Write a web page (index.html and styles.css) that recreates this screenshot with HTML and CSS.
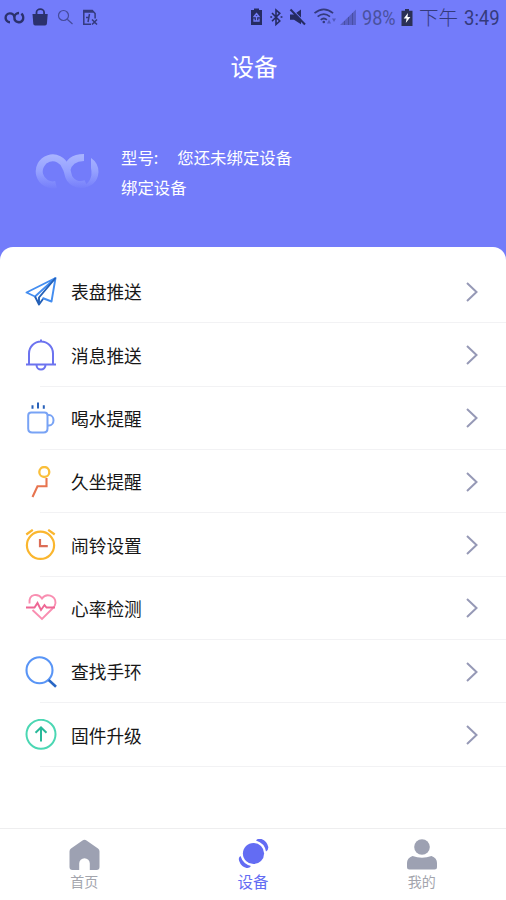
FILE: index.html
```html
<!DOCTYPE html>
<html lang="zh-CN">
<head>
    <meta charset="UTF-8">
    <meta name="viewport" content="width=device-width, initial-scale=1.0">
    <title>设备</title>
    <link rel="stylesheet" href="styles.css">
</head>
<body>
    <header class="header">
        <div class="status-bar">
            <svg class="status-left" width="100" height="34" viewBox="0 0 100 34">
                <g fill="none" stroke="#2b316d" stroke-width="2.4">
                    <path d="M10 22.2A4.4 4.4 0 1 1 14.4 17.5A4.6 4.6 0 0 1 19 13M14.4 17.5A4.5 4.5 0 0 0 23 19.5Q23.8 16 21.5 13.5"/>
                </g>
                <path fill="#2b316d" d="M32.500 14h15.200l-.8 9.800q-.2 1.700-1.800 1.700h-10q-1.600 0-1.800-1.700z"/>
                <path fill="none" stroke="#2b316d" stroke-width="1.8" d="M36.5 15v-2.500a3.8 3.300 0 0 1 7.600 0V15"/>
                <path fill="none" stroke="#454b9b" stroke-width="1.2" d="M68.5 15.5a5 5 0 1 1-10 0a5 5 0 1 1 10 0M67.5 19.5l5 4.5"/>
                <path fill="none" stroke="#343a7c" stroke-width="1.5" d="M91 24.3h-7.2V10.5h8.5l2.8 3v5M83 12h11M89.500 14l-1.500 8M86 17.5h3M92 19.5l5 5M97 19.5l-5 5"/>
            </svg>
            <svg class="status-right" width="112" height="34" viewBox="248 0 112 34">
                <path fill="#252b62" d="M251 10h3V8.500h5V10h3v15h-11z"/>
                <path fill="none" stroke="#737cfa" stroke-width="1.3" d="M256.500 13.500l2.500 3h-5zM256.500 16v5M254 18.500v2.500h5v-2.500"/>
                <path fill="none" stroke="#252b62" stroke-width="1.6" d="M272 13l7.8 8-3.8 3.5V10l3.8 3.3-7.8 8M270.3 17h1.8M280.6 17h1.8"/>
                <path fill="#252b62" d="M290 14.5h4l7-5v14.8l-7-4.5h-4z"/>
                <path fill="none" stroke="#737cfa" stroke-width="1.2" d="M292 9.5l14 14"/>
                <path fill="none" stroke="#252b62" stroke-width="2" d="M290.5 9.5l14.5 15"/>
                <g fill="none" stroke="#343a7c" stroke-width="1.7">
                    <path d="M314.5 13.2q9.3-7.5 18.6 0M317.6 16.6q6.2-5 12.4 0M320.7 19.8q3.1-2.6 6.2 0"/>
                </g>
                <circle cx="323.8" cy="22" r="1.3" fill="#343a7c"/>
                <path fill="#525abe" d="M329 19.5l2 4h-4zM334 22l-2-3.5h4z"/>
                <path fill="#5960c6" d="M340 25L356 9.5V25z"/>
                <path stroke="#484fa5" stroke-width="1" d="M344.5 21v4M348.5 17v8M352.5 13v12"/>
            </svg>
            <span class="status-text percent">98%</span>
            <svg class="battery" width="12" height="17" viewBox="0 0 12 17">
                <path fill="#2b3054" d="M.5 1.8H4V0h4v1.8h3.5V17H.5z"/>
                <path fill="#fff" d="M7 4L2.7 9.6H5.6L4.8 14 9.4 8H6.5z"/>
            </svg>
            <span class="ampm">下午</span>
            <span class="status-text time">3:49</span>
        </div>
        <h1 class="title">设备</h1>
        <div class="device">
            <svg class="device-logo" width="66" height="36" viewBox="0 0 66 36">
                <defs>
                    <linearGradient id="fade" gradientUnits="userSpaceOnUse" x1="0" y1="0" x2="0" y2="35">
                        <stop offset="0" stop-color="#aab5ff"/>
                        <stop offset=".5" stop-color="#95a1ff"/>
                        <stop offset="1" stop-color="#747dfa"/>
                    </linearGradient>
                </defs>
                <path fill="none" stroke="url(#fade)" stroke-width="7" d="M21 30.500A13.500 13.500 0 1 1 30.500 13Q32.500 17 33 20A13 12.500 0 0 0 51 29.500M31.500 17Q34 3.500 49 3.500"/>
                <path fill="url(#fade)" d="M56 4Q63.500 9 63.500 18Q62.500 33 45 34Q59 28 56 14z"/>
            </svg>
            <div class="device-info">
                <p>型号:<span class="device-name">您还未绑定设备</span></p>
                <p>绑定设备</p>
            </div>
        </div>
    </header>

    <main class="menu">
        <a class="menu-item">
            <svg class="icon" viewBox="0 0 32 32" fill="none" stroke="#438df0" stroke-width="1.9" stroke-linejoin="round">
                <path d="M30.5 2L1.5 16.5 10 20.5 30.5 2 26.5 25.5 17.5 22"/>
                <path stroke="#2460b7" d="M30.5 2L14 21.5V28.5L10 20.5M14 28.5L18 23"/>
            </svg>
            <span class="label">表盘推送</span>
            <svg class="arrow" viewBox="0 0 12 20"><path d="M1 1l9.5 9L1 19"/></svg>
        </a>
        <a class="menu-item">
            <svg class="icon" viewBox="0 0 32 32" fill="none" stroke="#6c73ef" stroke-width="2">
                <path d="M4 25V14.5a12 12 0 0 1 24 0V25M1 25.5h30M11.5 26a4.5 4.5 0 0 0 9 0M16 3V.5"/>
            </svg>
            <span class="label">消息推送</span>
            <svg class="arrow" viewBox="0 0 12 20"><path d="M1 1l9.5 9L1 19"/></svg>
        </a>
        <a class="menu-item">
            <svg class="icon" viewBox="0 0 32 32" fill="none" stroke="#78a3f5" stroke-width="2">
                <path d="M6.200 10.500h13.300q3 0 3 3v13q0 4-4 4H7.200q-4 0-4-4v-13q0-3 3-3zM22.5 13h1.5a4.3 5 0 0 1 0 10.500h-1.500"/>
                <path stroke="#2861b9" d="M7.500 3.300v3.500M13 .5v6M18.800 3.300v3.500"/>
            </svg>
            <span class="label">喝水提醒</span>
            <svg class="arrow" viewBox="0 0 12 20"><path d="M1 1l9.5 9L1 19"/></svg>
        </a>
        <a class="menu-item">
            <svg class="icon" viewBox="0 0 32 32" fill="none" stroke="#e7744f" stroke-width="2.1">
                <path d="M21.500 12v8.300H12.500L7.500 31"/>
                <circle cx="19.300" cy="6" r="5" stroke="#fabf3b" stroke-width="2.300"/>
            </svg>
            <span class="label">久坐提醒</span>
            <svg class="arrow" viewBox="0 0 12 20"><path d="M1 1l9.5 9L1 19"/></svg>
        </a>
        <a class="menu-item">
            <svg class="icon" viewBox="0 0 32 32" fill="none" stroke="#fab62e" stroke-width="2.2">
                <circle cx="15.500" cy="16.300" r="13.600"/>
                <path d="M1.300 5.500L7.800 .8M23.200 .8l6.500 4.700"/>
                <path stroke="#dc6d56" d="M15 10v7.200h7.800"/>
            </svg>
            <span class="label">闹铃设置</span>
            <svg class="arrow" viewBox="0 0 12 20"><path d="M1 1l9.5 9L1 19"/></svg>
        </a>
        <a class="menu-item">
            <svg class="icon" viewBox="0 0 32 32" fill="none" stroke="#f98eb1" stroke-width="1.9">
                <path d="M4.500 11.500C3.500 1 13.500 1.500 17 6.500C21 1 30.500 3 30.500 11Q30.300 14 27.500 16.500L17 27 7.500 18"/>
                <path stroke="#ee6694" d="M1 15.500h8.500l3-4.500 3.500 7 3.500-5 2 2.500H30"/>
            </svg>
            <span class="label">心率检测</span>
            <svg class="arrow" viewBox="0 0 12 20"><path d="M1 1l9.5 9L1 19"/></svg>
        </a>
        <a class="menu-item">
            <svg class="icon" viewBox="0 0 32 32" fill="none" stroke="#5995f6" stroke-width="2.1">
                <circle cx="14.5" cy="14.3" r="13"/>
                <path stroke="#2967c5" stroke-width="2.6" d="M23.7 24l7.3 6.7"/>
            </svg>
            <span class="label">查找手环</span>
            <svg class="arrow" viewBox="0 0 12 20"><path d="M1 1l9.5 9L1 19"/></svg>
        </a>
        <a class="menu-item">
            <svg class="icon" viewBox="0 0 32 32" fill="none" stroke="#4bd7b3" stroke-width="2">
                <circle cx="16" cy="15.300" r="14.500"/>
                <path stroke="#28b99a" d="M16 22.500V8.500M10.500 13.700L16 8.500l5.500 5.200"/>
            </svg>
            <span class="label">固件升级</span>
            <svg class="arrow" viewBox="0 0 12 20"><path d="M1 1l9.5 9L1 19"/></svg>
        </a>
    </main>

    <nav class="tab-bar">
        <a class="tab">
            <svg width="32" height="32" viewBox="0 0 32 32" fill="#9da1b2">
                <path d="M14.500 1.500q2-1.500 4 0l11.500 8q1.500 1 1.500 3V28q0 3-3 3h-6.700v-6.500a5.300 5.300 0 0 0-10.600 0V31H4.500q-3 0-3-3V12.500q0-2 1.500-3z"/>
            </svg>
            <span>首页</span>
        </a>
        <a class="tab active">
            <svg width="32" height="32" viewBox="0 0 32 32" fill="#636cf3">
                <circle cx="16.500" cy="14.500" r="10.600"/>
                <path d="M19 1.500Q21-1 24.500 0Q30 2 31.300 8Q31.500 11 29 12.500Q27.500 4 19 1.500z"/>
                <path d="M3.500 17Q1 18.500 2.200 22Q4 27.500 9.500 29Q12.500 29.500 14 27Q6 25 3.500 17z"/>
            </svg>
            <span>设备</span>
        </a>
        <a class="tab">
            <svg width="32" height="32" viewBox="0 0 32 32" fill="#9da1b2">
                <circle cx="16" cy="8" r="7.800"/>
                <path d="M6.500 17Q16 20.500 25.500 17Q31 19 31 24v4q0 2.500-2.500 2.500h-25Q1 30.500 1 28v-4q0-5 5.500-7z"/>
            </svg>
            <span>我的</span>
        </a>
    </nav>
</body>
</html>
```

FILE: styles.css
```css
* {
    box-sizing: border-box;
}
body {
    margin: 0;
    height: 900px;
    display: flex;
    flex-direction: column;
    background-color: #737cfa;
    font-family: "Noto Sans CJK SC", sans-serif;
    overflow: hidden;
}
svg {
    display: block;
    flex-shrink: 0;
}
.header {
    height: 247px;
    color: #fff;
}
.status-bar {
    height: 34px;
    display: flex;
    align-items: center;
    color: #343a7c;
}
.status-right {
    margin-left: 148px;
}
.status-text {
    font-family: Roboto, sans-serif;
    font-size: 21px;
    line-height: 34px;
    padding-top: 2px;
    transform-origin: left center;
    white-space: nowrap;
}
.percent {
    width: 34px;
    margin-left: 2px;
    margin-right: 5px;
    color: #4a519e;
    transform: scaleX(0.86);
}
.ampm {
    width: 40px;
    margin-left: 6px;
    font-size: 19.5px;
    line-height: 34px;
    font-weight: 300;
    white-space: nowrap;
}
.time {
    width: 36px;
    margin-left: 5px;
    transform: scaleX(0.88);
}
.title {
    margin: 14px 0 0;
    padding-left: 2px;
    text-align: center;
    font-size: 23.5px;
    font-weight: 400;
    line-height: 36px;
}
.device {
    display: flex;
    align-items: center;
    margin-top: 58px;
    padding-left: 35px;
}
.device-info {
    margin-left: 20px;
    font-size: 16.4px;
    line-height: 30px;
}
.device-info p {
    margin: 0;
}
.device-name {
    margin-left: 19px;
}
.menu {
    flex: 1;
    padding-top: 13px;
    background-color: #fff;
    border-radius: 13px 13px 0 0;
}
.menu-item {
    height: 63.35px;
    display: flex;
    align-items: center;
    padding: 0 28px 0 25px;
    background: linear-gradient(#f2f2f4, #f2f2f4) 40px 100% / 100% 1px no-repeat;
}
.icon {
    width: 32px;
    height: 32px;
}
.label {
    flex: 1;
    margin-left: 14px;
    padding-bottom: 1px;
    color: #171717;
    font-size: 17.7px;
    line-height: 26px;
}
.arrow {
    width: 12px;
    height: 20px;
    fill: none;
    stroke: #9699b6;
    stroke-width: 2;
}
.tab-bar {
    height: 72px;
    display: flex;
    background-color: #fff;
    border-top: 1px solid #eeeeef;
}
.tab {
    flex: 1;
    display: flex;
    flex-direction: column;
    align-items: center;
    padding-top: 10px;
    color: #a3a5ad;
    font-size: 14px;
    line-height: 20px;
}
.active {
    color: #636cf3;
    font-size: 15.5px;
}
```
